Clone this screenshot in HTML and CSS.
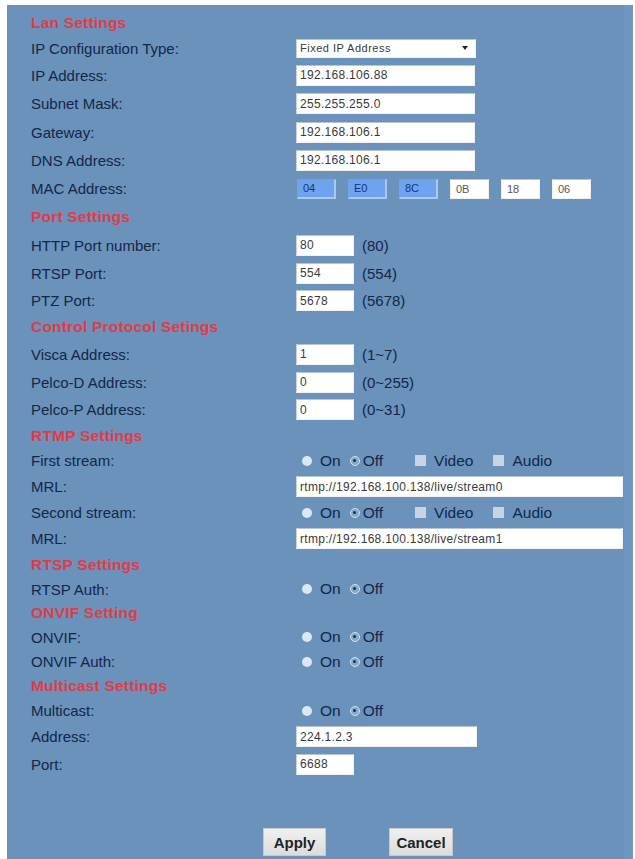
FILE: index.html
```html
<!DOCTYPE html>
<html>
<head>
<meta charset="utf-8">
<link rel="stylesheet" href="styles.css">
</head>
<body>
<div class="panel">
  <div class="form">
    <div class="row h24"><div class="sec">Lan Settings</div></div>
    <div class="row h26"><div class="lbl">IP Configuration Type:</div>
      <div class="ctl"><div class="select">Fixed IP Address<span class="caret"></span></div></div></div>
    <div class="row h28"><div class="lbl">IP Address:</div>
      <div class="ctl"><div class="inp w-mid">192.168.106.88</div></div></div>
    <div class="row h29"><div class="lbl">Subnet Mask:</div>
      <div class="ctl"><div class="inp w-mid">255.255.255.0</div></div></div>
    <div class="row h28"><div class="lbl">Gateway:</div>
      <div class="ctl"><div class="inp w-mid">192.168.106.1</div></div></div>
    <div class="row h28"><div class="lbl">DNS Address:</div>
      <div class="ctl"><div class="inp w-mid">192.168.106.1</div></div></div>
    <div class="row h29"><div class="lbl">MAC Address:</div>
      <div class="ctl mac">
        <div class="macbox sel">04</div>
        <div class="macbox sel">E0</div>
        <div class="macbox sel">8C</div>
        <div class="macbox">0B</div>
        <div class="macbox">18</div>
        <div class="macbox">06</div>
      </div></div>

    <div class="row h28"><div class="sec">Port Settings</div></div>
    <div class="row h28"><div class="lbl">HTTP Port number:</div>
      <div class="ctl"><div class="inp w-sm">80</div><span class="range">(80)</span></div></div>
    <div class="row h28"><div class="lbl">RTSP Port:</div>
      <div class="ctl"><div class="inp w-sm">554</div><span class="range">(554)</span></div></div>
    <div class="row h27"><div class="lbl">PTZ Port:</div>
      <div class="ctl"><div class="inp w-sm">5678</div><span class="range">(5678)</span></div></div>

    <div class="row h26"><div class="sec">Control Protocol Setings</div></div>
    <div class="row h28"><div class="lbl">Visca Address:</div>
      <div class="ctl"><div class="inp w-sm">1</div><span class="range">(1~7)</span></div></div>
    <div class="row h28"><div class="lbl">Pelco-D Address:</div>
      <div class="ctl"><div class="inp w-sm">0</div><span class="range">(0~255)</span></div></div>
    <div class="row h27"><div class="lbl">Pelco-P Address:</div>
      <div class="ctl"><div class="inp w-sm">0</div><span class="range">(0~31)</span></div></div>

    <div class="row h25"><div class="sec">RTMP Settings</div></div>
    <div class="row h25"><div class="lbl">First stream:</div>
      <div class="ctl">
        <span class="radio"></span><span class="opt">On</span>
        <span class="radio on"></span><span class="opt opt-off">Off</span>
        <span class="check first"></span><span class="opt">Video</span>
        <span class="check"></span><span class="opt">Audio</span>
      </div></div>
    <div class="row h27"><div class="lbl">MRL:</div>
      <div class="ctl"><div class="inp w-lg">rtmp://192.168.100.138/live/stream0</div></div></div>
    <div class="row h25"><div class="lbl">Second stream:</div>
      <div class="ctl">
        <span class="radio"></span><span class="opt">On</span>
        <span class="radio on"></span><span class="opt opt-off">Off</span>
        <span class="check first"></span><span class="opt">Video</span>
        <span class="check"></span><span class="opt">Audio</span>
      </div></div>
    <div class="row h27"><div class="lbl">MRL:</div>
      <div class="ctl"><div class="inp w-lg">rtmp://192.168.100.138/live/stream1</div></div></div>

    <div class="row h25"><div class="sec">RTSP Settings</div></div>
    <div class="row h24"><div class="lbl">RTSP Auth:</div>
      <div class="ctl"><span class="radio"></span><span class="opt">On</span><span class="radio on"></span><span class="opt opt-off">Off</span></div></div>

    <div class="row h24"><div class="sec">ONVIF Setting</div></div>
    <div class="row h24"><div class="lbl">ONVIF:</div>
      <div class="ctl"><span class="radio"></span><span class="opt">On</span><span class="radio on"></span><span class="opt opt-off">Off</span></div></div>
    <div class="row h25"><div class="lbl">ONVIF Auth:</div>
      <div class="ctl"><span class="radio"></span><span class="opt">On</span><span class="radio on"></span><span class="opt opt-off">Off</span></div></div>

    <div class="row h24"><div class="sec">Multicast Settings</div></div>
    <div class="row h25"><div class="lbl">Multicast:</div>
      <div class="ctl"><span class="radio"></span><span class="opt">On</span><span class="radio on"></span><span class="opt opt-off">Off</span></div></div>
    <div class="row h27"><div class="lbl">Address:</div>
      <div class="ctl"><div class="inp w-addr">224.1.2.3</div></div></div>
    <div class="row h28"><div class="lbl">Port:</div>
      <div class="ctl"><div class="inp w-sm">6688</div></div></div>
  </div>
  <div class="buttons">
    <div class="btn apply">Apply</div>
    <div class="btn cancel">Cancel</div>
  </div>
</div>
</body>
</html>
```

FILE: styles.css
```css
html, body {
  margin: 0;
  padding: 0;
  background: #ffffff;
  overflow: hidden;
}

.panel {
  margin: 5px 2px 0 7px;
  width: 626px;
  height: 854px;
  box-sizing: border-box;
  padding: 6px 0 0 24px;
  background: #6a92bb;
  border-right: 9px solid #6d96c0;
  font-family: "Liberation Sans", Arial, sans-serif;
}

.row {
  display: grid;
  grid-template-columns: 265px 1fr;
  align-items: center;
}
.h24 { height: 24px; }
.h25 { height: 25px; }
.h26 { height: 26px; }
.h27 { height: 27px; }
.h28 { height: 28px; }
.h29 { height: 29px; }

.sec {
  grid-column: 1 / 3;
  color: #e23b47;
  font-weight: bold;
  font-size: 15.5px;
  letter-spacing: 0.2px;
}

.lbl {
  color: #14264a;
  font-size: 15px;
}

.ctl {
  display: flex;
  align-items: center;
  justify-content: flex-start;
}

.inp, .select {
  box-sizing: border-box;
  height: 21px;
  margin: 0;
  background: #ffffff;
  border: 1px solid #f2f2f2;
  border-top-color: #b9c5d2;
  border-left-color: #c8d2dc;
  color: #3a3a3a;
  font-size: 12px;
  letter-spacing: 0.3px;
  padding: 0 3px;
  display: flex;
  align-items: center;
  white-space: nowrap;
  flex: none;
}
.w-mid { width: 179px; }
.w-sm { width: 58px; }
.w-lg { width: 327px; }
.w-addr { width: 181px; }

.select {
  width: 180px;
  height: 19px;
  font-size: 11px;
  letter-spacing: 0.5px;
  justify-content: space-between;
  padding-right: 7px;
}
.caret {
  width: 0;
  height: 0;
  border-left: 3px solid transparent;
  border-right: 3px solid transparent;
  border-top: 4px solid #222;
}

.range {
  margin-left: 8px;
  color: #14264a;
  font-size: 15px;
}

.mac {
  gap: 12px;
  padding-left: 1px;
}
.macbox {
  box-sizing: border-box;
  width: 39px;
  height: 20px;
  background: #ffffff;
  border: 1px solid #f0f0f0;
  border-top-color: #b9c5d2;
  color: #555555;
  font-size: 11px;
  padding-left: 5px;
  display: flex;
  align-items: center;
}
.macbox.sel {
  background: #6fa3ee;
  border-color: #6fa3ee;
  border-bottom: 2px solid #a9c9f2;
  border-right: 2px solid #a9c9f2;
  color: #14357c;
}

.radio {
  box-sizing: border-box;
  width: 10px;
  height: 10px;
  border-radius: 50%;
  background: #dbe7f3;
  margin-left: 6px;
  flex: none;
}
.radio.on {
  margin-left: 9px;
  background: #86a8cc;
  border: 1.5px solid #d5e1ee;
  position: relative;
}
.radio.on::after {
  content: "";
  position: absolute;
  left: 2px;
  top: 2px;
  width: 3px;
  height: 3px;
  border-radius: 50%;
  background: #1d3153;
}
.opt {
  color: #14264a;
  font-size: 15.5px;
  margin-left: 8px;
}
.opt.opt-off {
  margin-left: 3px;
}

.check {
  width: 11px;
  height: 11px;
  background: #c8d4e3;
  margin-left: 20px;
  flex: none;
}
.check.first {
  margin-left: 32px;
}

.buttons {
  display: flex;
  gap: 63px;
  margin-top: 50px;
  padding-left: 232px;
}
.btn {
  box-sizing: border-box;
  height: 28px;
  display: flex;
  align-items: center;
  justify-content: center;
  background: linear-gradient(#f0f0f0, #dcdcdc);
  border: 1px solid #c8c8c8;
  color: #222222;
  font-weight: bold;
  font-size: 15px;
}
.apply { width: 63px; }
.cancel { width: 64px; }
```
